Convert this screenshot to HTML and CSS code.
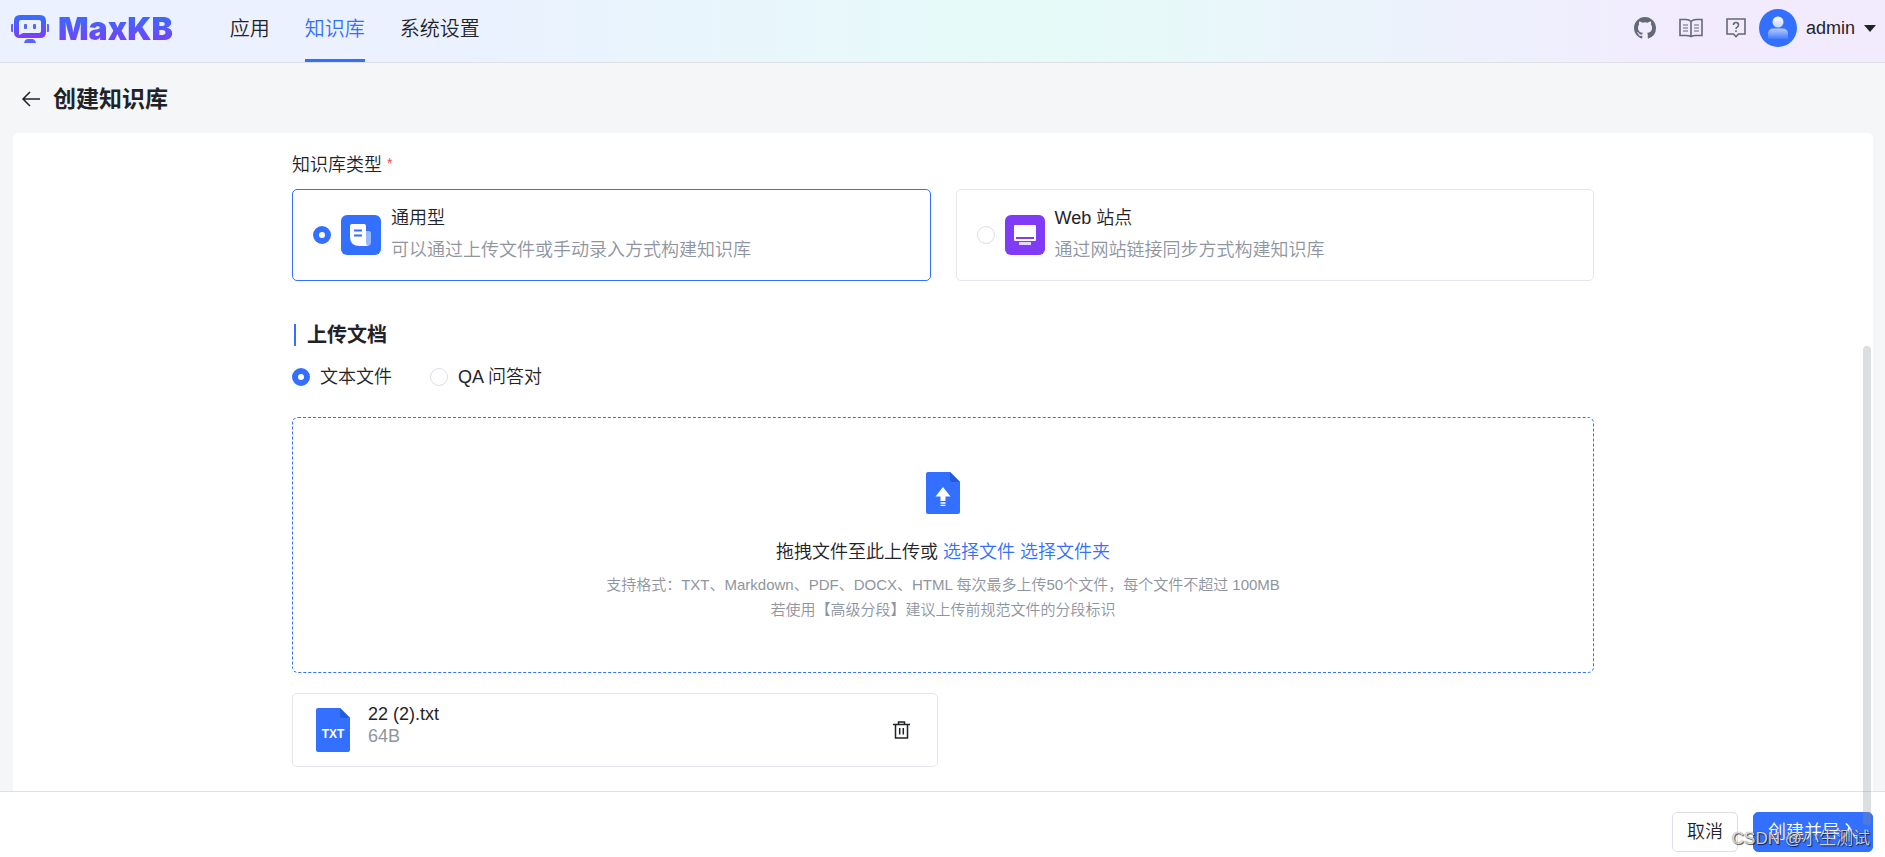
FILE: index.html
```html
<!DOCTYPE html>
<html lang="zh-CN">
<head>
<meta charset="utf-8">
<title>MaxKB</title>
<link rel="stylesheet" href="styles.css">
</head>
<body>
<header class="topbar">
  <a class="logo" href="#">
    <svg class="logo-mark" viewBox="0 0 38 28" aria-hidden="true">
      <defs><linearGradient id="brand" x1="0" y1="0" x2="0" y2="1"><stop offset="0" stop-color="#3370ff"/><stop offset="1" stop-color="#7f3bf5"/></linearGradient></defs>
      <path fill="#5a63fb" d="M0 10q0-1 1-1h1v8H1q-1 0-1-1zM38 10q0-1-1-1h-1v8h1q1 0 1-1z"/>
      <path fill="url(#brand)" fill-rule="evenodd" d="M9 0h20q6 0 6 6v11q0 6-6 6H9q-6 0-6-6V6q0-6 6-6zm1 5q-2 0-2 2v13l4-2h16q2 0 2-2V7q0-2-2-2z"/>
      <rect x="13" y="9" width="3" height="5" rx="1" fill="#4e68fc"/><rect x="22" y="9" width="3" height="5" rx="1" fill="#4e68fc"/>
      <path fill="#5a63fb" d="M13 28q1-4 4-4h4q3 0 4 4z"/>
    </svg>
    <span class="logo-text">MaxKB</span>
  </a>
  <nav class="nav">
    <a href="#">应用</a>
    <a href="#" class="active">知识库</a>
    <a href="#">系统设置</a>
  </nav>
  <div class="tools">
    <a href="#" aria-label="GitHub"><svg width="22" height="22" viewBox="0 0 16 16" fill="#646a73"><path d="M8 0C3.58 0 0 3.58 0 8c0 3.54 2.29 6.53 5.47 7.59.4.07.55-.17.55-.38v-1.49c-2.01.37-2.53-.49-2.69-.94-.09-.23-.48-.94-.82-1.13-.28-.15-.68-.52-.01-.53.63-.01 1.08.58 1.23.82.72 1.21 1.87.87 2.33.66.07-.52.28-.87.51-1.07-1.78-.2-3.64-.89-3.64-3.95 0-.87.31-1.59.82-2.15-.08-.2-.36-1.02.08-2.12 0 0 .67-.21 2.2.82a7.6 7.6 0 0 1 4 0c1.53-1.04 2.2-.82 2.2-.82.44 1.1.16 1.92.08 2.12.51.56.82 1.27.82 2.15 0 3.07-1.87 3.75-3.65 3.95.29.25.54.73.54 1.48v2.2c0 .21.15.46.55.38A8 8 0 0 0 16 8c0-4.42-3.58-8-8-8z"/></svg></a>
    <a href="#" aria-label="文档"><svg width="26" height="20" viewBox="0 0 26 20" fill="none" stroke="#646a73" stroke-width="1.6"><path d="M13 3.5Q11 1.5 8 1.5H2v16h6q3 0 5 1 2-1 5-1h6v-16h-6q-3 0-5 2zM13 3.500V18"/><path d="M5 7h5M5 10h5M5 13h5M16 7h5M16 10h5M16 13h5" stroke-width="1.2"/></svg></a>
    <a href="#" aria-label="帮助"><svg width="20" height="20" viewBox="0 0 20 20" fill="none" stroke="#646a73" stroke-width="1.600"><path d="M1 1h18v15h-6.500L10 18.500 7.500 16H1z"/><path d="M7.500 7q0-2.500 2.500-2.500T12.500 7q0 1.300-1.300 2.100T10 11M10 12.300v1.600"/></svg></a>
    <button class="user" type="button">
      <svg width="38" height="38" viewBox="0 0 38 38" aria-hidden="true"><defs><linearGradient id="body" x1="0" y1="0" x2="0" y2="1"><stop offset="0" stop-color="#fff" stop-opacity=".65"/><stop offset="1" stop-color="#fff" stop-opacity=".08"/></linearGradient><linearGradient id="head" x1="0" y1="0" x2="0" y2="1"><stop offset="0" stop-color="#fff"/><stop offset="1" stop-color="#fff" stop-opacity=".7"/></linearGradient></defs><circle cx="19" cy="19" r="19" fill="#3370ff"/><circle cx="19" cy="13" r="5.500" fill="url(#head)"/><path d="M9 30v-5q0-5.500 5.500-5.500h9q5.500 0 5.500 5.500v5z" fill="url(#body)"/></svg>
      <span>admin</span>
      <svg width="12" height="8" viewBox="0 0 12 8" aria-hidden="true"><path d="M0 1h12L6 8z" fill="#1f2329"/></svg>
    </button>
  </div>
</header>

<div class="page-head">
  <button class="back" type="button" aria-label="返回"><svg width="20" height="16" viewBox="0 0 20 16" fill="none" stroke="#1f2329" stroke-width="1.500"><path d="M19 8H2M9 1L2 8l7 7"/></svg></button>
  <h1>创建知识库</h1>
</div>

<main class="panel">
  <form class="form">
    <div class="label" id="type-label">知识库类型 <span class="star">*</span></div>
    <div class="types" role="radiogroup" aria-labelledby="type-label">
      <label class="type selected">
        <input type="radio" name="type" checked>
        <svg width="40" height="40" viewBox="0 0 40 40" aria-hidden="true"><rect width="40" height="40" rx="6" fill="#3370ff"/><path d="M24 16h4q2 0 2 2v9q0 4-4 4h-6z" fill="#fff" opacity=".5"/><path d="M11 9h12q2 0 2 2v16q0 3 2 4h-8q-10 0-10-9V11q0-2 2-2z" fill="#fff"/><path d="M13 15.500h8M13 20.500h8" stroke="#3370ff" stroke-width="2"/></svg>
        <span class="type-text"><span>通用型</span><span class="muted">可以通过上传文件或手动录入方式构建知识库</span></span>
      </label>
      <label class="type">
        <input type="radio" name="type">
        <svg width="40" height="40" viewBox="0 0 40 40" aria-hidden="true"><rect width="40" height="40" rx="6" fill="#7f3bf5"/><path fill="#fff" fill-rule="evenodd" d="M10 10h20q1 0 1 1v14q0 1-1 1H10q-1 0-1-1V11q0-1 1-1zm1 12v2h18v-2z"/><path fill="#fff" opacity=".8" d="M14 27h12v3H14z"/></svg>
        <span class="type-text"><span>Web 站点</span><span class="muted">通过网站链接同步方式构建知识库</span></span>
      </label>
    </div>

    <h2>上传文档</h2>
    <div class="modes">
      <label><input type="radio" name="mode" checked>文本文件</label>
      <label><input type="radio" name="mode">QA 问答对</label>
    </div>

    <section class="drop">
      <svg width="34" height="42" viewBox="0 0 34 42" aria-hidden="true"><path d="M2 0h22l10 10v30q0 2-2 2H2q-2 0-2-2V2q0-2 2-2z" fill="#3370ff"/><path d="M24 0l10 10h-8q-2 0-2-2z" fill="#245bdb"/><path d="M17 15l7.500 9.500H19.500V29h-5v-4.500h-5zM14.500 30.200h5v1.500h-5zM14.500 32.700h5V34h-5z" fill="#fff"/></svg>
      <p class="drop-text">拖拽文件至此上传或 <a href="#">选择文件</a> <a href="#">选择文件夹</a></p>
      <p class="hint">支持格式：TXT、Markdown、PDF、DOCX、HTML 每次最多上传50个文件，每个文件不超过 100MB</p>
      <p class="hint">若使用【高级分段】建议上传前规范文件的分段标识</p>
    </section>

    <div class="files">
      <div class="file">
        <svg width="34" height="44" viewBox="0 0 34 44" aria-hidden="true"><path d="M2 0h22l10 10v32q0 2-2 2H2q-2 0-2-2V2q0-2 2-2z" fill="#3370ff"/><path d="M24 0l10 10h-8q-2 0-2-2z" fill="#245bdb"/><text x="17" y="30" class="file-tag">TXT</text></svg>
        <div class="file-info"><span>22 (2).txt</span><span class="muted">64B</span></div>
        <button type="button" class="trash" aria-label="删除"><svg width="17" height="18" viewBox="0 0 17 18" fill="none" stroke="#1f2329" stroke-width="1.500"><path d="M0 3.500h17M5.500 3V1h6v2M2.500 4v13h12V4M6.700 7v6.500M10.300 7v6.500"/></svg></button>
      </div>
    </div>
  </form>
</main>

<footer class="actions">
  <button type="button" class="btn">取消</button>
  <button type="button" class="btn primary">创建并导入</button>
</footer>
<div class="thumb"></div>
<div class="watermark">CSDN @小生测试</div>
</body>
</html>
```
FILE: styles.css
```css
* { box-sizing: border-box; }

body {
  display: flex;
  flex-direction: column;
  height: 100vh;
  margin: 0;
  overflow: hidden;
  background: #f5f6f7;
  color: #1f2329;
  font: 350 18px/22px "Liberation Sans", "Noto Sans CJK SC", sans-serif;
}

a { color: #3370ff; text-decoration: none; }
button { font: inherit; color: inherit; cursor: pointer; }
svg { display: block; flex: none; }
p, h1, h2 { margin: 0; }
.muted { color: #8f959e; }

.topbar {
  display: flex;
  flex: none;
  height: 63px;
  padding: 0 9px 0 11px;
  border-bottom: 1px solid #dee0e3;
  background: linear-gradient(90deg, #ebf1ff 24%, #e5fbf8 56%, #f2ebfe 90%);
}

.logo {
  display: flex;
  align-items: center;
  gap: 9px;
  height: 58px;
  margin-right: 57px;
}
.logo-mark { width: 38px; height: 28px; }
.logo-text {
  font: 900 32px/32px Inter, "Liberation Sans", sans-serif;
  color: transparent;
  background: linear-gradient(#3370ff, #7f3bf5);
  background-clip: text;
  -webkit-background-clip: text;
}

.nav { display: flex; gap: 35px; font-size: 20px; }
.nav a {
  height: 62px;
  color: inherit;
  line-height: 58px;
}
.nav .active { color: #3370ff; border-bottom: 3px solid #3370ff; }

.tools {
  display: flex;
  align-items: center;
  gap: 22px;
  height: 56px;
  margin-left: auto;
}
.user {
  display: flex;
  align-items: center;
  gap: 9px;
  margin-left: -9px;
  padding: 0;
  border: 0;
  background: none;
}

.page-head {
  display: flex;
  flex: none;
  align-items: center;
  gap: 12px;
  height: 70px;
  padding: 2px 21px 0;
}
.back { padding: 0; border: 0; background: none; }
h1 { font-size: 23px; line-height: 30px; font-weight: 700; }

.panel {
  flex: 1;
  min-height: 0;
  margin: 0 12px 0 13px;
  overflow: hidden;
  border-radius: 5px 5px 0 0;
  background: #fff;
}
.form { width: 70%; margin: 0 auto; padding-top: 20px; }

.label { line-height: 24px; margin-bottom: 12px; }
.star { color: #f54a45; font-size: 14px; vertical-align: top; line-height: 20px; }

.types { display: grid; grid-template-columns: 1fr 1fr; gap: 25px; }
.type {
  display: flex;
  align-items: center;
  gap: 10px;
  height: 92px;
  padding: 0 20px;
  border: 1px solid #e4e7ed;
  border-radius: 5px;
}
.selected { border-color: #3370ff; }
.type-text { display: flex; flex-direction: column; gap: 10px; padding-bottom: 2px; }

input[type="radio"] {
  flex: none;
  appearance: none;
  width: 18px;
  height: 18px;
  margin: 0;
  border: 1px solid #dcdfe6;
  border-radius: 50%;
  background: #fff;
}
input[type="radio"]:checked { border: 6px solid #3370ff; }

h2 {
  margin: 43px 0 0 2px;
  padding-left: 11px;
  border-left: 2px solid #3370ff;
  font-size: 20px;
  line-height: 22px;
  font-weight: 700;
}
.modes { display: flex; gap: 38px; margin: 20px 0 29px; }
.modes label { display: flex; align-items: center; gap: 10px; line-height: 22px; }

.drop {
  display: flex;
  flex-direction: column;
  align-items: center;
  height: 256px;
  padding-top: 54px;
  border: 1px dashed #3370ff;
  border-radius: 6px;
}
.drop-text { margin: 27px 0 9px; line-height: 22px; }
.hint { color: #8f959e; font-size: 15px; line-height: 25px; }

.files { display: grid; grid-template-columns: 1fr 1fr; gap: 10px; margin-top: 20px; }
.file {
  display: flex;
  align-items: center;
  height: 74px;
  padding: 0 27px 0 23px;
  border: 1px solid #e4e7ed;
  border-radius: 5px;
}
.file-tag { fill: #fff; font: 700 12px "Liberation Sans", sans-serif; text-anchor: middle; }
.file-info { display: flex; flex-direction: column; margin-left: 18px; padding-bottom: 10px; }
.trash { margin-left: auto; padding: 0; border: 0; background: none; }

.actions {
  display: flex;
  flex: none;
  align-items: flex-start;
  justify-content: flex-end;
  gap: 15px;
  height: 66px;
  padding: 20px 12px 0;
  border-top: 1px solid #dee0e3;
  background: #fff;
}
.btn {
  height: 40px;
  padding: 0 14px;
  border: 1px solid #dcdfe6;
  border-radius: 5px;
  background: #fff;
}
.primary { border-color: #3370ff; background: #3370ff; color: #fff; }

.thumb {
  position: absolute;
  top: 346px;
  right: 14px;
  bottom: 32px;
  width: 8px;
  border-radius: 4px;
  background: rgba(144, 147, 153, .3);
}
.watermark {
  position: absolute;
  right: 15px;
  bottom: 7px;
  color: rgba(255, 255, 255, .8);
  font-size: 17px;
  text-shadow: 1px 1px 1px rgba(0, 0, 0, .7), 0 0 1px rgba(0, 0, 0, .6);
}
```
